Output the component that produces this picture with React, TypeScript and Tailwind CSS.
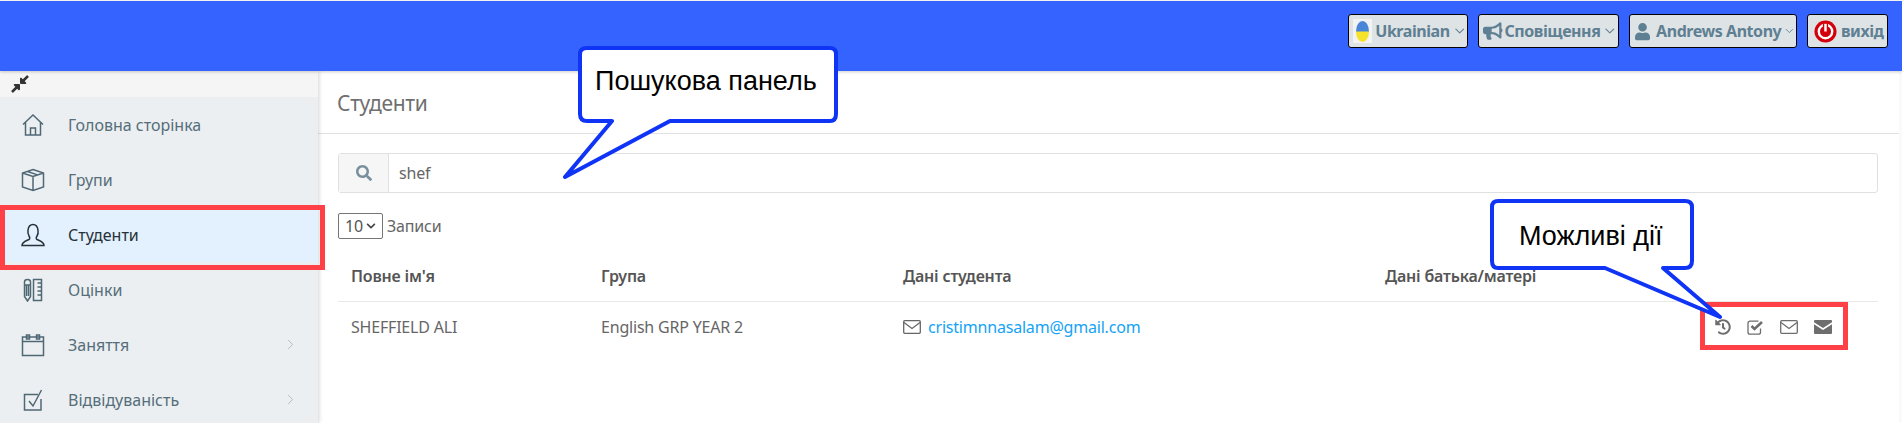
import React from "react";
import { FaCompressAlt, FaBullhorn, FaUser, FaSearch, FaHistory, FaChevronDown } from "react-icons/fa";
import { ChevronDown, ChevronRight } from "lucide-react";

const ink = { stroke: "#4f6875", strokeWidth: 1.5, fill: "none" };
const Home = () => (
  <svg width="24" height="24" viewBox="0 0 24 24" {...ink}><path d="M2 11.500 12 2l10 9.500M4.500 9.500V22h15V9.500M9.500 22v-7h5v7" /></svg>
);
const Box = () => (
  <svg width="24" height="24" viewBox="0 0 24 24" {...ink}><path d="M12 1.500 22.500 5v14L12 22.500 1.500 19V5zM1.500 5 12 8.500 22.500 5M12 8.500v14M6.500 3.500l10 3.400" /></svg>
);
const Person = () => (
  <svg width="24" height="24" viewBox="0 0 24 24" fill="none" stroke="#263238" strokeWidth="1.5"><path d="M1 22.500h22c0-3.500-4-4.500-7-6-1-.6-1-2 0-3.500 1.200-1.800 1.300-4 1-6C16.500 3.500 14.500 1.500 12 1.500S7.500 3.500 7 7c-.3 2 0 4.200 1 6 1 1.500 1 2.900 0 3.500-3 1.500-7 2.500-7 6z" /></svg>
);
const Ruler = () => (
  <svg width="24" height="24" viewBox="0 0 24 24" {...ink}><path d="M3.500 4c0-3.200 6-3.200 6 0v14.500l-3 4.500-3-4.500zM3.500 7h6M5.500 7v11M7.500 7v11M12.500 1.500h8v21h-8zM16.500 5h4M16.500 9h4M16.500 13h4M16.500 17h4" /></svg>
);
const Calendar = () => (
  <svg width="24" height="24" viewBox="0 0 24 24" {...ink}><path d="M1.500 4h21v18.500h-21zM1.500 8.500h21M5.500 2h3v4h-3zM15.500 2h3v4h-3z" /></svg>
);
const Check = () => (
  <svg width="24" height="24" viewBox="0 0 24 24" {...ink}><path d="M17 6.500H3.500v15.500h16.500V11M8 13l4 5L20.500 2" /></svg>
);
const EnvelopeLine = ({ w = 18, h = 14 }: { w?: number; h?: number }) => (
  <svg width={w} height={h} viewBox="0 0 18 14" fill="none" stroke="currentColor" strokeWidth="1.300"><rect x="0.700" y="0.700" width="16.600" height="12.600" rx="1" /><path d="M1 2.500 9 8.500l8-6" /></svg>
);
const EnvelopeSolid = () => (
  <svg width="18" height="14" viewBox="0 0 18 14" fill="currentColor"><path d="M0 1a1 1 0 0 1 1-1h16a1 1 0 0 1 1 1v1.200L9 8 0 2.200zM0 4.200 9 10l9-5.800V13a1 1 0 0 1-1 1H1a1 1 0 0 1-1-1z" /></svg>
);
const CheckSquare = () => (
  <svg width="17" height="15" viewBox="0 0 17 15" fill="none" stroke="currentColor"><path d="M11.500 1.200H3a2 2 0 0 0-2 2v9a2 2 0 0 0 2 2h8.500a2 2 0 0 0 2-2V8.500" strokeWidth="1.300" /><path d="M4.500 6 7.500 9l7.500-7" strokeWidth="2.600" /></svg>
);

const items = [
  { label: "Головна сторінка", icon: <Home /> },
  { label: "Групи", icon: <Box /> },
  { label: "Студенти", icon: <Person />, active: true },
  { label: "Оцінки", icon: <Ruler /> },
  { label: "Заняття", icon: <Calendar />, arrow: true },
  { label: "Відвідуваність", icon: <Check />, arrow: true },
];

const TopButton = ({ className, children }: { className: string; children: React.ReactNode }) => (
  <div className={`flex h-[34px] items-center whitespace-nowrap rounded-[3px] border border-black bg-[#dee3e6] pl-1 text-[16px] font-bold tracking-[-0.45px] text-[#5f7f92] ${className}`}>
    {children}
  </div>
);

const Callout = ({ className, w, h, d, text, tx }: { className: string; w: number; h: number; d: string; text: string; tx: string }) => (
  <div className={`absolute z-20 ${className}`}>
    <svg width={w} height={h} viewBox={`0 0 ${w} ${h}`}>
      <path d={d} fill="#fff" stroke="#0f34f5" strokeWidth="4" strokeLinejoin="round" />
    </svg>
    <span className={`absolute whitespace-nowrap font-['Liberation_Sans',sans-serif] text-[27px] leading-[32px] text-black ${tx}`}>{text}</span>
  </div>
);

export default function App() {
  return (
    <div className="relative h-[423px] w-[1902px] overflow-hidden bg-[#fafafa] pt-[1px] font-['Noto_Sans',sans-serif] text-[#666]">
      <header className="relative z-10 flex h-[70px] items-start justify-end gap-[10px] bg-[#3563ff] pr-[14px] pt-[13px] shadow-[0_1px_3px_rgba(0,0,0,0.2)]">
        <TopButton className="w-[120px]">
          <span className="mr-[3px] flex h-[24px] w-[20px] items-center justify-center bg-[#f3f3f3]">
            <span className="h-[21px] w-[13px] rounded-[50%] bg-[linear-gradient(#4a86d8_0_48%,#f5e22a_52%_100%)] blur-[0.5px]" />
          </span>
          Ukrainian
          <ChevronDown size={16} strokeWidth={1.6} className="ml-[2px]" />
        </TopButton>
        <TopButton className="w-[141px]">
          <FaBullhorn size={20} className="mr-[2px]" />
          Сповіщення
          <ChevronDown size={16} strokeWidth={1.6} className="ml-[2px]" />
        </TopButton>
        <TopButton className="w-[168px]">
          <FaUser size={19} className="ml-[1px] mr-[6px]" />
          Andrews Antony
          <ChevronDown size={16} strokeWidth={1.6} className="ml-[2px]" />
        </TopButton>
        <TopButton className="w-[81px]">
          <svg width="23" height="23" viewBox="0 0 24 24" className="ml-[2px] mr-[4px]">
            <circle cx="12" cy="12" r="11.500" fill="#d3000c" />
            <circle cx="12" cy="12" r="7" fill="none" stroke="#fff" strokeWidth="2.500" />
            <path d="M12 3v10" stroke="#d3000c" strokeWidth="5.500" />
            <path d="M12 4v8" stroke="#fff" strokeWidth="2.600" />
          </svg>
          вихід
        </TopButton>
      </header>

      <div className="flex h-[352px]">
        <aside className="relative z-[1] w-[318px] shrink-0 bg-[#eceff1] shadow-[1px_0_4px_rgba(0,0,0,0.18)]">
          <div className="flex h-[26px] items-center bg-[#f5f5f5] pl-[10px]">
            <FaCompressAlt size={20} className="text-[#333]" />
          </div>
          <nav>
            {items.map((it) => (
              <div key={it.label} className={`flex h-[55px] items-center pl-[21px] pr-[19px] text-[16px] ${it.active ? "bg-[#e3f0fe] text-[#263238]" : "text-[#546e7a]"}`}>
                <span className="mr-[23px] flex w-[24px] justify-center">{it.icon}</span>
                <span className="flex-1">{it.label}</span>
                {it.arrow && <ChevronRight size={17} strokeWidth={1.4} className="text-[#b0bec5]" />}
              </div>
            ))}
          </nav>
        </aside>

        <main className="mr-[3px] min-w-0 flex-1 bg-white">
          <h1 className="flex h-[63px] items-center border-b border-[#e2e2e2] pl-[19px] pt-[3px] text-[21px] font-normal tracking-[-0.3px] text-[#6f6f6f]">Студенти</h1>
          <div className="pl-[20px] pr-[21px] pt-[19px]">
            <div className="flex h-[40px] rounded-[3px] border border-[#e0e0e0]">
              <div className="flex w-[50px] items-center justify-center border-r border-[#e0e0e0] bg-[#f6f6f6]">
                <FaSearch size={16} className="text-[#78909c]" />
              </div>
              <div className="flex items-center pl-[10px] text-[16px] tracking-[-0.2px] text-[#666]">shef</div>
            </div>
            <div className="mt-[20px] flex h-[26px] items-center text-[16px] tracking-[-0.2px]">
              <div className="mr-[4px] flex h-[26px] w-[45px] items-center justify-center gap-[3px] rounded-[2px] border border-[#767676] text-[#555]">
                10<FaChevronDown size={10} className="text-[#444]" />
              </div>
              Записи
            </div>
            <table className="mt-[17px] w-full table-fixed text-left text-[16px] tracking-[-0.2px]">
              <colgroup>
                <col className="w-[250px]" />
                <col className="w-[302px]" />
                <col className="w-[482px]" />
                <col />
                <col className="w-[170px]" />
              </colgroup>
              <thead>
                <tr className="h-[45px] border-b border-[#e8e8e8] text-[#555]">
                  <th className="pb-[5px] pl-[13px] font-semibold">Повне ім'я</th>
                  <th className="pb-[5px] pl-[13px] font-semibold">Група</th>
                  <th className="pb-[5px] pl-[13px] font-semibold">Дані студента</th>
                  <th className="pb-[5px] pl-[13px] font-semibold">Дані батька/матері</th>
                  <th />
                </tr>
              </thead>
              <tbody>
                <tr className="h-[52px]">
                  <td className="pl-[13px]">SHEFFIELD ALI</td>
                  <td className="pl-[13px]">English GRP YEAR 2</td>
                  <td className="pl-[13px]">
                    <span className="flex items-center gap-[7px]">
                      <span className="text-[#666]"><EnvelopeLine /></span>
                      <span className="text-[#14a3f5]">cristimnnasalam@gmail.com</span>
                    </span>
                  </td>
                  <td />
                  <td>
                    <span className="flex items-center gap-[16px] pl-[7px] text-[#6e6e6e]">
                      <FaHistory size={16} />
                      <CheckSquare />
                      <EnvelopeLine />
                      <EnvelopeSolid />
                    </span>
                  </td>
                </tr>
              </tbody>
            </table>
          </div>
        </main>
      </div>

      <div className="absolute left-0 top-[205px] z-20 h-[65px] w-[325px] border-[5px] border-[#ff4046]" />
      <div className="absolute left-[1700px] top-[302px] z-20 h-[48px] w-[148px] border-[5px] border-[#ff4046]" />

      <Callout className="left-[560px] top-[44px]" w={282} h={138} tx="left-[35px] top-[21px]" text="Пошукова панель"
        d="M27 4H270Q276 4 276 10V70Q276 77 270 77H110L5 133L52 77H27Q20 77 20 70V10Q20 4 27 4Z" />
      <Callout className="left-[1485px] top-[197px]" w={240} h={124} tx="left-[34px] top-[23px]" text="Можливі дії"
        d="M13 4H200Q207 4 207 10V64Q207 71 200 71H178L235 120L120 71H13Q7 71 7 64V10Q7 4 13 4Z" />
    </div>
  );
}
